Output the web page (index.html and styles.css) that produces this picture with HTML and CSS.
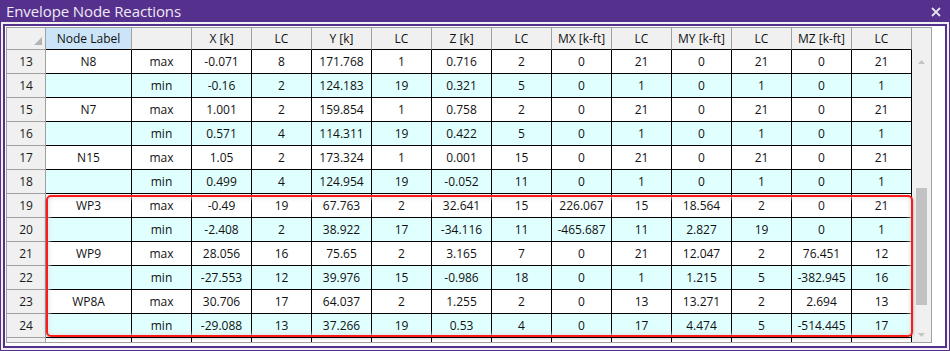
FILE: index.html
```html
<!DOCTYPE html>
<html>
<head>
<meta charset="utf-8">
<title>Envelope Node Reactions</title>
<link rel="stylesheet" href="styles.css">
</head>
<body>
<div class="window">
  <div class="titlebar">
    <span class="title">Envelope Node Reactions</span>
    <svg class="close" width="10" height="10" viewBox="0 0 10 10"><path d="M1 1L9 9M9 1L1 9" stroke="#e4e0ec" stroke-width="1.8" fill="none"/></svg>
  </div>
  <div class="content">
    <div class="panel">
      <div class="grid">
        <div class="table">
          <div class="row head">
            <div class="cell rh corner"><span class="tri"></span></div>
            <div class="cell hc sel">Node Label</div>
            <div class="cell hc"></div>
            <div class="cell hc">X [k]</div>
            <div class="cell hc">LC</div>
            <div class="cell hc">Y [k]</div>
            <div class="cell hc">LC</div>
            <div class="cell hc">Z [k]</div>
            <div class="cell hc">LC</div>
            <div class="cell hc">MX [k-ft]</div>
            <div class="cell hc">LC</div>
            <div class="cell hc">MY [k-ft]</div>
            <div class="cell hc">LC</div>
            <div class="cell hc">MZ [k-ft]</div>
            <div class="cell hc">LC</div>
          </div>
          <div class="row max"><div class="cell rh">13</div><div class="cell">N8</div><div class="cell">max</div><div class="cell">-0.071</div><div class="cell">8</div><div class="cell">171.768</div><div class="cell">1</div><div class="cell">0.716</div><div class="cell">2</div><div class="cell">0</div><div class="cell">21</div><div class="cell">0</div><div class="cell">21</div><div class="cell">0</div><div class="cell">21</div></div>
          <div class="row min"><div class="cell rh">14</div><div class="cell"></div><div class="cell">min</div><div class="cell">-0.16</div><div class="cell">2</div><div class="cell">124.183</div><div class="cell">19</div><div class="cell">0.321</div><div class="cell">5</div><div class="cell">0</div><div class="cell">1</div><div class="cell">0</div><div class="cell">1</div><div class="cell">0</div><div class="cell">1</div></div>
          <div class="row max"><div class="cell rh">15</div><div class="cell">N7</div><div class="cell">max</div><div class="cell">1.001</div><div class="cell">2</div><div class="cell">159.854</div><div class="cell">1</div><div class="cell">0.758</div><div class="cell">2</div><div class="cell">0</div><div class="cell">21</div><div class="cell">0</div><div class="cell">21</div><div class="cell">0</div><div class="cell">21</div></div>
          <div class="row min"><div class="cell rh">16</div><div class="cell"></div><div class="cell">min</div><div class="cell">0.571</div><div class="cell">4</div><div class="cell">114.311</div><div class="cell">19</div><div class="cell">0.422</div><div class="cell">5</div><div class="cell">0</div><div class="cell">1</div><div class="cell">0</div><div class="cell">1</div><div class="cell">0</div><div class="cell">1</div></div>
          <div class="row max"><div class="cell rh">17</div><div class="cell">N15</div><div class="cell">max</div><div class="cell">1.05</div><div class="cell">2</div><div class="cell">173.324</div><div class="cell">1</div><div class="cell">0.001</div><div class="cell">15</div><div class="cell">0</div><div class="cell">21</div><div class="cell">0</div><div class="cell">21</div><div class="cell">0</div><div class="cell">21</div></div>
          <div class="row min"><div class="cell rh">18</div><div class="cell"></div><div class="cell">min</div><div class="cell">0.499</div><div class="cell">4</div><div class="cell">124.954</div><div class="cell">19</div><div class="cell">-0.052</div><div class="cell">11</div><div class="cell">0</div><div class="cell">1</div><div class="cell">0</div><div class="cell">1</div><div class="cell">0</div><div class="cell">1</div></div>
          <div class="row max"><div class="cell rh">19</div><div class="cell">WP3</div><div class="cell">max</div><div class="cell">-0.49</div><div class="cell">19</div><div class="cell">67.763</div><div class="cell">2</div><div class="cell">32.641</div><div class="cell">15</div><div class="cell">226.067</div><div class="cell">15</div><div class="cell">18.564</div><div class="cell">2</div><div class="cell">0</div><div class="cell">21</div></div>
          <div class="row min"><div class="cell rh">20</div><div class="cell"></div><div class="cell">min</div><div class="cell">-2.408</div><div class="cell">2</div><div class="cell">38.922</div><div class="cell">17</div><div class="cell">-34.116</div><div class="cell">11</div><div class="cell">-465.687</div><div class="cell">11</div><div class="cell">2.827</div><div class="cell">19</div><div class="cell">0</div><div class="cell">1</div></div>
          <div class="row max"><div class="cell rh">21</div><div class="cell">WP9</div><div class="cell">max</div><div class="cell">28.056</div><div class="cell">16</div><div class="cell">75.65</div><div class="cell">2</div><div class="cell">3.165</div><div class="cell">7</div><div class="cell">0</div><div class="cell">21</div><div class="cell">12.047</div><div class="cell">2</div><div class="cell">76.451</div><div class="cell">12</div></div>
          <div class="row min"><div class="cell rh">22</div><div class="cell"></div><div class="cell">min</div><div class="cell">-27.553</div><div class="cell">12</div><div class="cell">39.976</div><div class="cell">15</div><div class="cell">-0.986</div><div class="cell">18</div><div class="cell">0</div><div class="cell">1</div><div class="cell">1.215</div><div class="cell">5</div><div class="cell">-382.945</div><div class="cell">16</div></div>
          <div class="row max"><div class="cell rh">23</div><div class="cell">WP8A</div><div class="cell">max</div><div class="cell">30.706</div><div class="cell">17</div><div class="cell">64.037</div><div class="cell">2</div><div class="cell">1.255</div><div class="cell">2</div><div class="cell">0</div><div class="cell">13</div><div class="cell">13.271</div><div class="cell">2</div><div class="cell">2.694</div><div class="cell">13</div></div>
          <div class="row min"><div class="cell rh">24</div><div class="cell"></div><div class="cell">min</div><div class="cell">-29.088</div><div class="cell">13</div><div class="cell">37.266</div><div class="cell">19</div><div class="cell">0.53</div><div class="cell">4</div><div class="cell">0</div><div class="cell">17</div><div class="cell">4.474</div><div class="cell">5</div><div class="cell">-514.445</div><div class="cell">17</div></div>
          <div class="row partial"><div class="cell rh"></div><div class="cell"></div><div class="cell"></div><div class="cell"></div><div class="cell"></div><div class="cell"></div><div class="cell"></div><div class="cell"></div><div class="cell"></div><div class="cell"></div><div class="cell"></div><div class="cell"></div><div class="cell"></div><div class="cell"></div><div class="cell"></div></div>
        </div>
        <div class="vscroll">
          <div class="sb-head"></div>
          <div class="sb-btn sb-up"><svg width="7" height="4" viewBox="0 0 7 4"><path d="M0 4L3.5 0L7 4Z" fill="#c4c4c4"/></svg></div>
          <div class="sb-track"><div class="thumb"></div></div>
          <div class="sb-btn sb-down"><svg width="7" height="4" viewBox="0 0 7 4"><path d="M0 0L3.5 4L7 0Z" fill="#c4c4c4"/></svg></div>
        </div>
        <div class="highlight"></div>
      </div>
    </div>
  </div>
</div>
</body>
</html>
```

FILE: styles.css
```css
html, body {
  margin: 0;
  padding: 0;
  background: #f0f0f0;
}

.window {
  width: 950px;
  height: 351px;
  box-sizing: border-box;
  background: #56308d;
  display: flex;
  flex-direction: column;
  overflow: hidden;
}

.titlebar {
  height: 22px;
  flex: 0 0 22px;
  display: flex;
  align-items: center;
  justify-content: space-between;
  padding: 0 9px 0 6px;
}

.title {
  font-family: "Open Sans", "Noto Sans", sans-serif;
  font-size: 15px;
  color: #eeeaf4;
  line-height: 22px;
  letter-spacing: -0.1px;
}

.close {
  display: block;
  margin-top: 1px;
}

.content {
  flex: 1;
  margin: 0 1px 1px 1px;
  background: #f0f0f0;
  padding: 2px;
  display: flex;
}

.panel {
  flex: 1;
  border: 2px solid #56308d;
  background: #ffffff;
  padding: 1px;
  display: flex;
  align-items: flex-start;
}

.grid {
  position: relative;
  display: flex;
  border: 1px solid #a0a0a0;
  background: #ffffff;
}

.table {
  display: flex;
  flex-direction: column;
}

.row {
  display: grid;
  grid-template-columns: 39px 86px 60px repeat(12, 60px);
  height: 24px;
}

.row.head {
  height: 22px;
}

.row.partial {
  height: 4px;
}

.cell {
  box-sizing: border-box;
  border-right: 1px solid #000;
  border-bottom: 1px solid #000;
  font-family: "Open Sans", "Noto Sans", sans-serif;
  font-size: 12px;
  color: #111;
  line-height: 23px;
  text-align: center;
  white-space: nowrap;
  overflow: hidden;
}

.row.min .cell {
  background: #e0ffff;
}

.row.partial .cell {
  border-bottom: none;
  background: #fff;
}

.cell.rh,
.row.min .cell.rh,
.row.partial .cell.rh {
  background: #f0f0f0;
  border-right-color: #a0a0a0;
  border-bottom-color: #a0a0a0;
  color: #1a1a1a;
}

.cell.hc {
  background: #f0f0f0;
  border-right-color: #a0a0a0;
  line-height: 21px;
}

.cell.hc.sel {
  background: #cce4f7;
}

.cell.corner {
  position: relative;
  border-bottom: 1px solid #a0a0a0;
}

.tri {
  position: absolute;
  right: 3px;
  bottom: 4px;
  width: 0;
  height: 0;
  border-left: 8px solid transparent;
  border-bottom: 8px solid #b4b4b4;
}

.vscroll {
  width: 19px;
  background: #f0f0f0;
  display: flex;
  flex-direction: column;
}

.sb-head {
  height: 22px;
}

.sb-btn {
  display: flex;
  align-items: center;
  justify-content: center;
}

.sb-btn svg {
  display: block;
}

.sb-up {
  height: 23px;
}

.sb-track {
  flex: 1;
}

.thumb {
  margin: 115px 0 0 4px;
  width: 11px;
  height: 117px;
  background: #c2c2c4;
}

.sb-down {
  height: 14px;
}

.highlight {
  position: absolute;
  left: 39px;
  top: 167px;
  width: 867px;
  height: 142px;
  box-sizing: border-box;
  border: 2px solid #ff1a1a;
  border-radius: 5px;
  box-shadow: 0 1px 3px rgba(0, 0, 0, 0.35), inset 0 0 5px 1px rgba(225, 225, 225, 0.9);
  pointer-events: none;
}
```
